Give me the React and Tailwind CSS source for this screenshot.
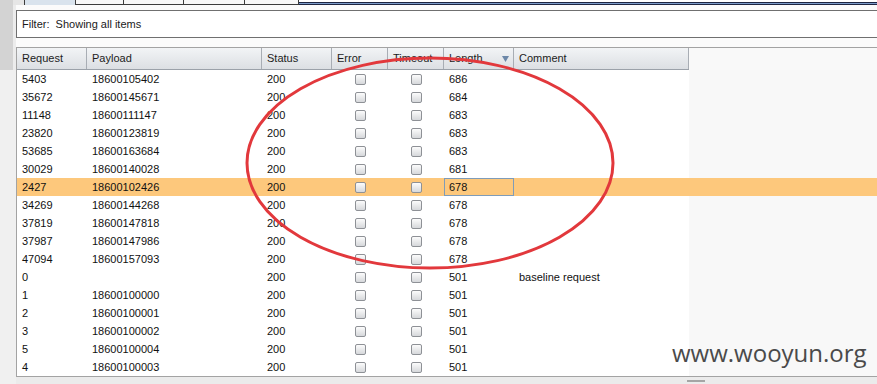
import React from "react";

const rows = [
  ["5403", "18600105402", "686"],
  ["35672", "18600145671", "684"],
  ["11148", "18600111147", "683"],
  ["23820", "18600123819", "683"],
  ["53685", "18600163684", "683"],
  ["30029", "18600140028", "681"],
  ["2427", "18600102426", "678", "", true],
  ["34269", "18600144268", "678"],
  ["37819", "18600147818", "678"],
  ["37987", "18600147986", "678"],
  ["47094", "18600157093", "678"],
  ["0", "", "501", "baseline request"],
  ["1", "18600100000", "501"],
  ["2", "18600100001", "501"],
  ["3", "18600100002", "501"],
  ["5", "18600100004", "501"],
  ["4", "18600100003", "501"],
];

function Check() {
  return (
    <div className="w-[11px] h-[11px] rounded-[2px] border border-[#8e9196] bg-linear-to-b from-[#fcfcfc] to-[#d6d8db]" />
  );
}

function HeadCell({ w, children, extra = "" }) {
  return (
    <div className={`${w} h-full border-r border-[#a8adb4] pl-[5px] flex items-center ${extra}`}>
      {children}
    </div>
  );
}

export default function App() {
  return (
    <div className="w-[877px] h-[384px] overflow-hidden relative flex bg-[#f0f0f0] text-[11px] leading-none text-[#111] font-['Liberation_Sans',Arial,sans-serif]">
      {/* left gutter */}
      <div className="w-[13px] shrink-0 flex flex-col">
        <div className="h-[70px] bg-[#d3d3d3]" />
        <div className="flex-1 bg-[#f0f0f0]" />
      </div>

      <div className="flex-1 flex flex-col">
        {/* tab strip */}
        <div className="h-[5px] flex shrink-0">
          <div className="w-[11px] bg-[#e6e6e6]" />
          <div className="w-[51px] border-l border-[#3c3c3c] bg-[#d9e3ed]" />
          <div className="w-[48px] border-l border-[#3c3c3c] bg-[#f8f8f8] border-b border-b-[#3c3c3c]" />
          <div className="w-[60px] border-l border-[#3c3c3c] bg-[#f8f8f8] border-b border-b-[#3c3c3c]" />
          <div className="w-[61px] border-l border-[#3c3c3c] bg-[#f8f8f8] border-b border-b-[#3c3c3c]" />
          <div className="w-[54px] border-l border-[#3c3c3c] bg-[#f8f8f8] border-b border-b-[#3c3c3c]" />
          <div className="flex-1 border-l border-[#3c3c3c] flex flex-col">
            <div className="h-[2px] bg-white" />
            <div className="h-px bg-[#1d2541]" />
            <div className="h-px bg-[#7b9bc9]" />
            <div className="h-px bg-[#1d2541]" />
          </div>
        </div>

        <div className="flex-1 flex">
          <div className="w-[3px] flex flex-col">
            <div className="h-[65px] bg-[#ececec]" />
            <div className="flex-1 bg-[#f0f0f0]" />
          </div>

          <div className="flex-1 flex flex-col bg-[#fbfbfb]">
            <div className="h-[5px] shrink-0" />
            {/* filter */}
            <div className="h-[28px] shrink-0 bg-white border-y border-l border-[#707070] flex items-center pl-[5px] text-[#1a1a1a]">
              Filter:&nbsp; Showing all items
            </div>
            <div className="h-[9px] shrink-0" />

            {/* scroll pane */}
            <div className="flex-1 min-h-0 overflow-hidden border-t border-l border-b border-[#a3a3a3] flex flex-col">
              {/* header */}
              <div className="h-[22px] shrink-0 flex">
                <div className="flex h-full bg-linear-to-b from-[#f2f4f6] to-[#dcdfe3] border-b border-[#9ba1a9] text-[#1c1c1c]">
                  <HeadCell w="w-[70px]">Request</HeadCell>
                  <HeadCell w="w-[175px]">Payload</HeadCell>
                  <HeadCell w="w-[70px]">Status</HeadCell>
                  <HeadCell w="w-[56px]">Error</HeadCell>
                  <HeadCell w="w-[56px]">Timeout</HeadCell>
                  <HeadCell w="w-[70px]" extra="justify-between pr-[4px]">
                    <span>Length</span>
                    <svg width="7" height="6" viewBox="0 0 7 6">
                      <path d="M0 0 H7 L3.5 6 Z" fill="#6c87a8" />
                    </svg>
                  </HeadCell>
                  <HeadCell w="w-[175px]">Comment</HeadCell>
                </div>
                <div className="flex-1 bg-[#f9f9f9]" />
              </div>

              {/* rows */}
              {rows.map((r, i) => {
                const sel = r[4];
                return (
                  <div key={i} className={`h-[18px] shrink-0 flex ${sel ? "bg-[#fdc87c]" : ""}`}>
                    <div className={`w-[672px] flex items-center ${sel ? "" : "bg-white"}`}>
                      <div className="w-[70px] pl-[5px]">{r[0]}</div>
                      <div className="w-[175px] pl-[5px]">{r[1]}</div>
                      <div className="w-[70px] pl-[5px]">200</div>
                      <div className="w-[56px] flex justify-center pl-[1px]">
                        <Check />
                      </div>
                      <div className="w-[56px] flex justify-center pl-[1px]">
                        <Check />
                      </div>
                      <div
                        className={`w-[70px] h-full flex items-center ${
                          sel ? "border border-[#7f9cb8] pl-[4px]" : "pl-[5px]"
                        }`}
                      >
                        {r[2]}
                      </div>
                      <div className="w-[175px] pl-[5px]">{r[3]}</div>
                    </div>
                    <div className={`flex-1 ${sel ? "" : "bg-[#f8f8f8]"}`} />
                  </div>
                );
              })}
            </div>

            {/* bottom strip */}
            <div className="h-[10px] shrink-0 bg-[#ebebeb] pl-[671px] pt-[3px]">
              <div className="w-[18px] h-[2px] bg-[#a5a5a5]" />
            </div>
          </div>
        </div>
      </div>

      {/* red annotation ellipse */}
      <svg className="absolute inset-0 pointer-events-none" width="877" height="384">
        <ellipse cx="430" cy="163" rx="183" ry="105" fill="none" stroke="#e2383c" strokeWidth="3" />
      </svg>

      {/* watermark */}
      <div className="absolute left-[672px] top-[341px] text-[24px] leading-none text-[#4a4a4a] font-['Open_Sans',sans-serif]">
        www.wooyun.org
      </div>
    </div>
  );
}
